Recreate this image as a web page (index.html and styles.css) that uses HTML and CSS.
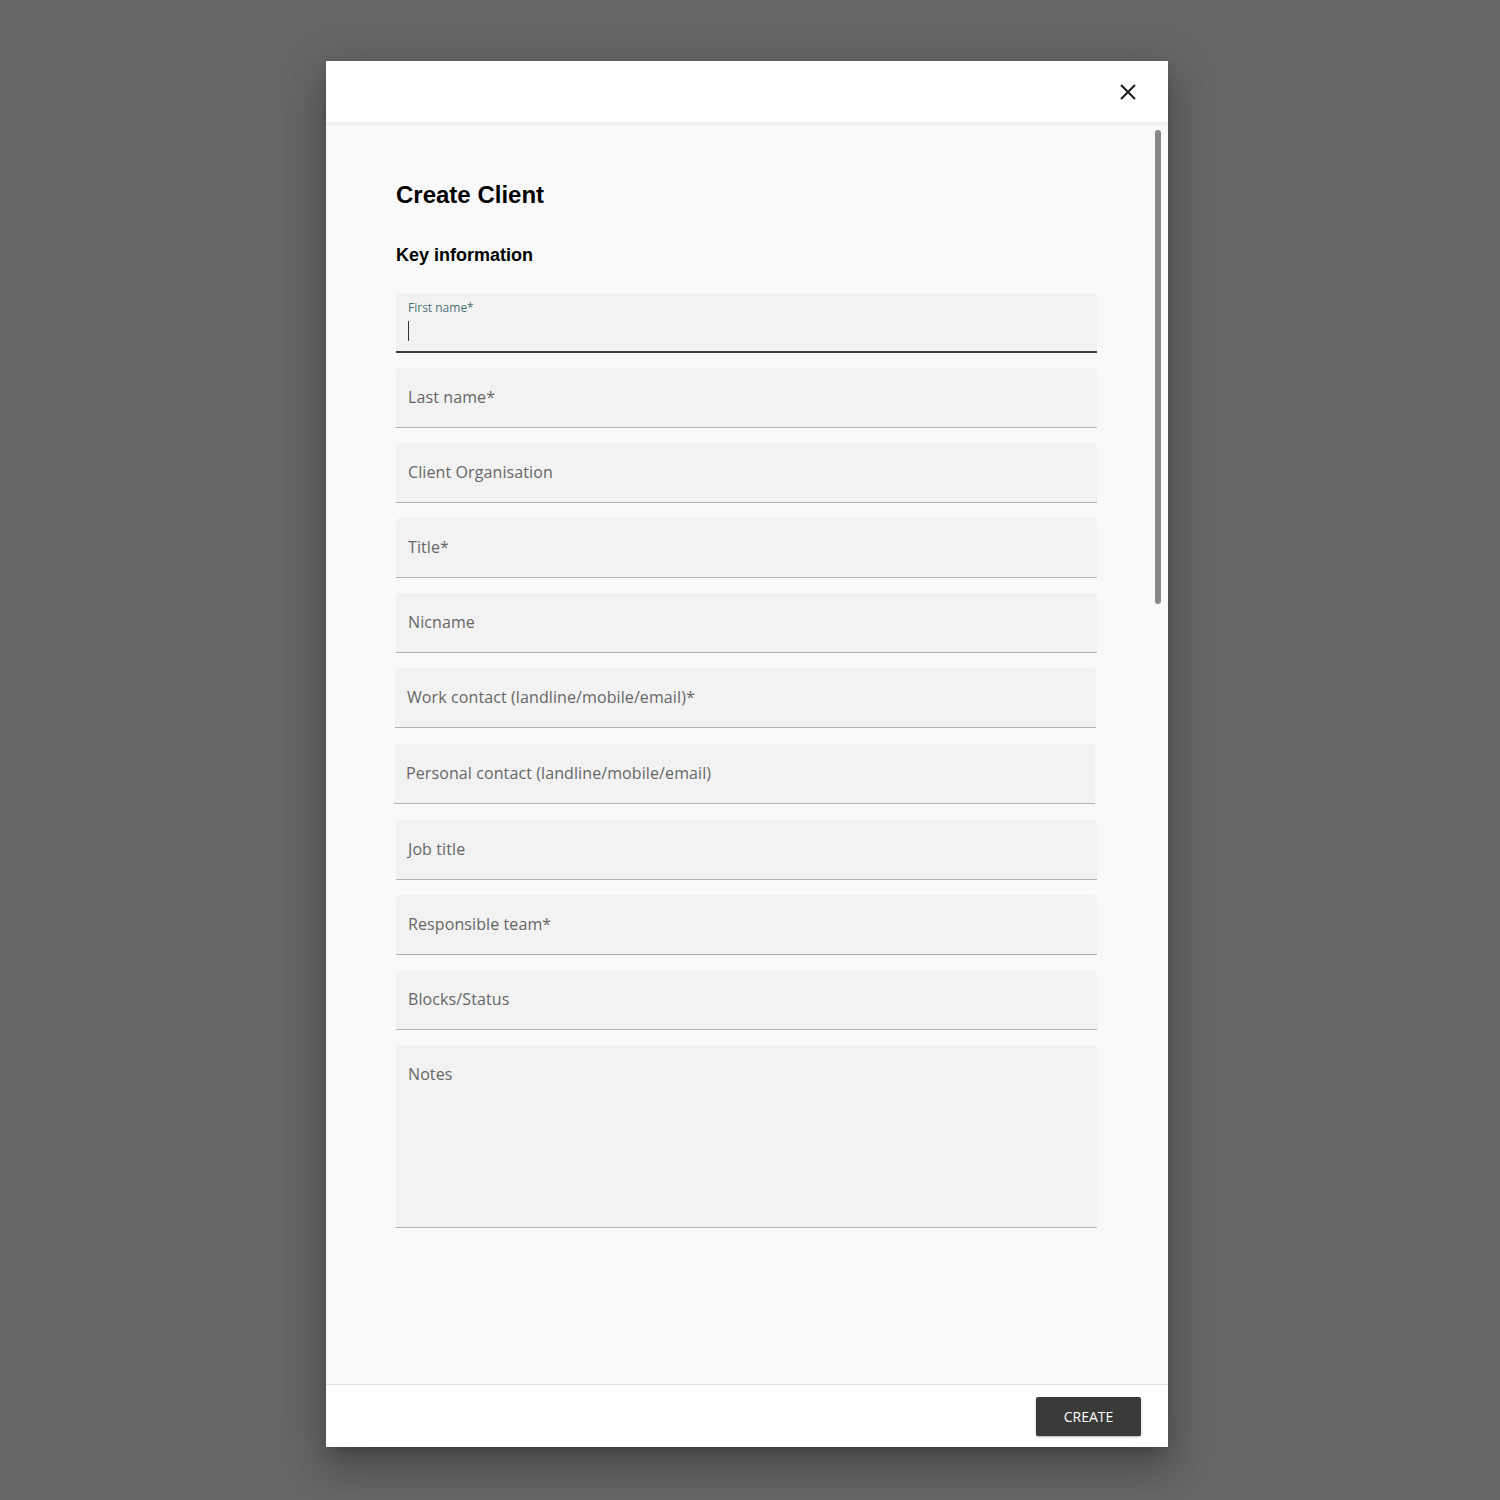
FILE: index.html
```html
<!DOCTYPE html>
<html lang="en">
<head>
    <meta charset="UTF-8">
    <title>Create Client</title>
    <link rel="stylesheet" href="styles.css">
</head>
<body>
    <div class="dialog">
        <div class="dialog-header">
            <button class="close-btn" aria-label="Close">
                <svg width="18" height="18" viewBox="0 0 18 18">
                    <path d="M2 2 L16 16 M16 2 L2 16" stroke="#222" stroke-width="2.2" fill="none"/>
                </svg>
            </button>
        </div>
        <div class="dialog-body">
            <div class="scroll-thumb"></div>
            <h1 class="title">Create Client</h1>
            <h2 class="section-title">Key information</h2>
            <div class="fields">
                <div class="field focused">
                    <span class="float-label">First name*</span>
                    <span class="caret"></span>
                </div>
                <div class="field"><span class="label">Last name*</span></div>
                <div class="field"><span class="label">Client Organisation</span></div>
                <div class="field"><span class="label">Title*</span></div>
                <div class="field"><span class="label">Nicname</span></div>
                <div class="field shift-1"><span class="label">Work contact (landline/mobile/email)*</span></div>
                <div class="field shift-2"><span class="label">Personal contact (landline/mobile/email)</span></div>
                <div class="field nudge"><span class="label">Job title</span></div>
                <div class="field"><span class="label">Responsible team*</span></div>
                <div class="field"><span class="label">Blocks/Status</span></div>
                <div class="field notes"><span class="label">Notes</span></div>
            </div>
        </div>
        <div class="dialog-footer">
            <button class="create-btn">CREATE</button>
        </div>
    </div>
</body>
</html>
```

FILE: styles.css
```css
* {
    margin: 0;
    padding: 0;
    box-sizing: border-box;
}

body {
    min-height: 100vh;
    background: #676767;
    font-family: 'Open Sans', sans-serif;
    overflow: hidden;
}

.dialog {
    width: 842px;
    height: 1386px;
    margin: 61px 0 0 326px;
    display: flex;
    flex-direction: column;
    background: #f9f9f9;
    box-shadow: 0 11px 15px -7px rgba(0, 0, 0, 0.25), 0 24px 38px 3px rgba(0, 0, 0, 0.16), 0 9px 46px 8px rgba(0, 0, 0, 0.12);
}

.dialog-header {
    height: 61px;
    flex: none;
    background: #fff;
    display: flex;
    justify-content: flex-end;
    align-items: center;
    padding-right: 30px;
    position: relative;
    z-index: 1;
    box-shadow: 0 2px 4px rgba(0, 0, 0, 0.07);
}

.close-btn {
    width: 20px;
    height: 20px;
    border: none;
    background: transparent;
    display: flex;
    align-items: center;
    justify-content: center;
    cursor: pointer;
    margin-top: 1px;
}

.dialog-body {
    flex: 1;
    position: relative;
    padding: 59px 0 0 70px;
}

.scroll-thumb {
    position: absolute;
    top: 8px;
    right: 7px;
    width: 6px;
    height: 474px;
    border-radius: 3px;
    background: #888;
}

.title {
    font-family: 'Liberation Sans', Arial, sans-serif;
    font-size: 24px;
    line-height: 28px;
    font-weight: bold;
    color: #000;
}

.section-title {
    font-family: 'Liberation Sans', Arial, sans-serif;
    font-size: 18px;
    line-height: 22px;
    font-weight: bold;
    color: #000;
    margin-top: 35px;
}

.fields {
    margin-top: 27px;
    width: 701px;
    display: flex;
    flex-direction: column;
    align-items: flex-start;
    gap: 15px;
}

.field {
    width: 701px;
    height: 60px;
    background: #f2f2f2;
    border-radius: 4px 4px 0 0;
    border-bottom: 1px solid #b2b2b2;
    padding: 0 12px;
    display: flex;
    flex-direction: column;
}

.field .label {
    font-size: 16px;
    line-height: 59px;
    color: #666;
    letter-spacing: 0.1px;
}

.field.focused {
    border-bottom: 2px solid #3c3c3c;
    padding-top: 7px;
}

.float-label {
    font-size: 12px;
    line-height: 16px;
    color: #4b7479;
}

.caret {
    display: block;
    width: 1px;
    height: 20px;
    margin-top: 5px;
    background: #333;
}

.field.shift-1 {
    margin-left: -1px;
}

.field.shift-2 {
    margin-left: -2px;
    margin-top: 1px;
}

.field.nudge {
    margin-top: 1px;
}

.field.notes {
    height: 183px;
}

.dialog-footer {
    height: 63px;
    flex: none;
    background: #fff;
    border-top: 1px solid #e0e0e0;
    display: flex;
    justify-content: flex-end;
    align-items: center;
    padding-right: 27px;
}

.create-btn {
    width: 105px;
    height: 39px;
    border: none;
    border-radius: 2px;
    background: #3a3a38;
    color: #fff;
    font-family: 'Open Sans', sans-serif;
    font-size: 14px;
    cursor: pointer;
    box-shadow: 0 1px 2px rgba(0, 0, 0, 0.3);
}
```
